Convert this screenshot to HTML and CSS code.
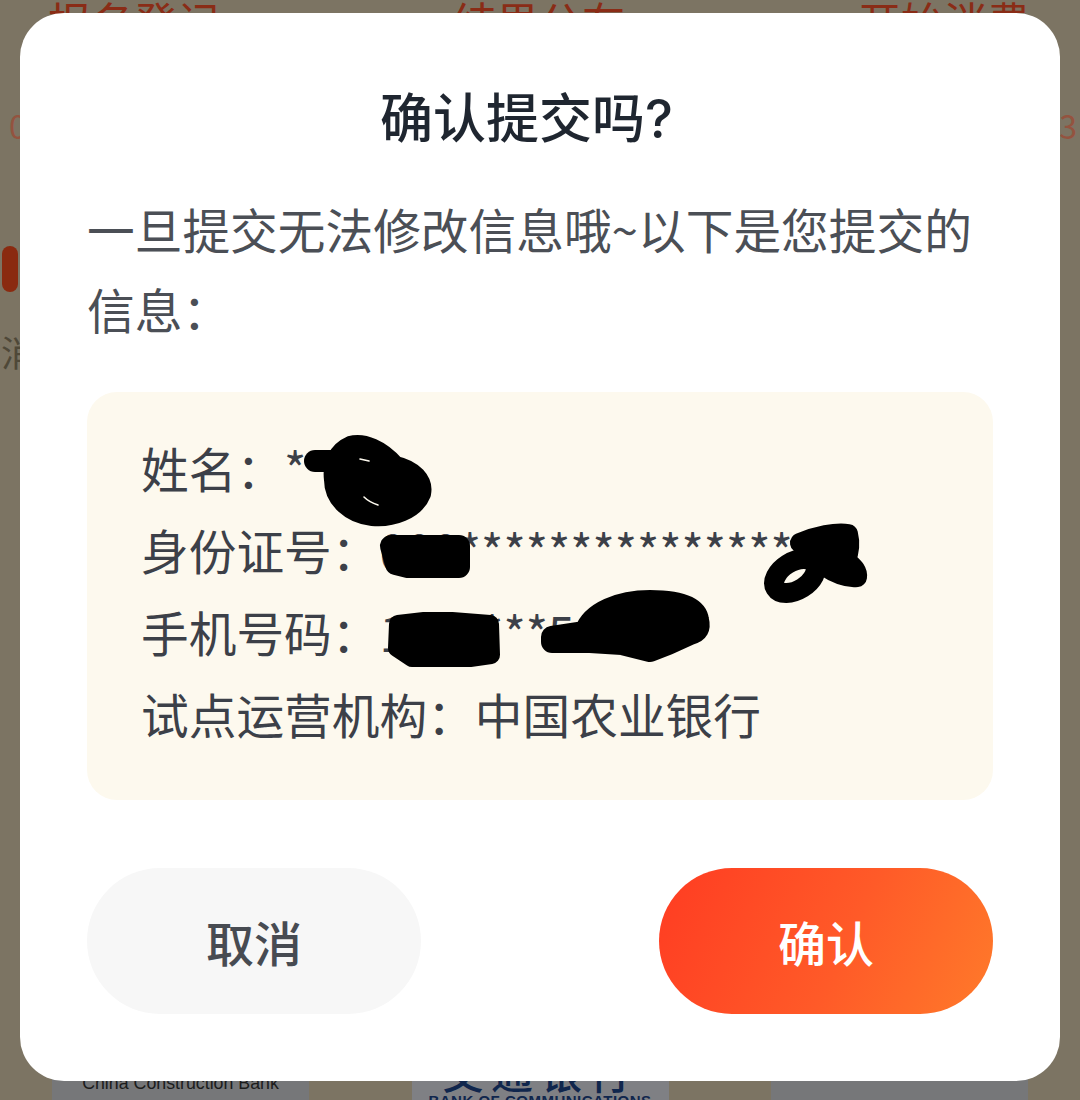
FILE: index.html
```html
<!DOCTYPE html>
<html lang="zh-CN">
<head>
<meta charset="utf-8">
<title>确认提交吗?</title>
<link rel="stylesheet" href="styles.css">
</head>
<body>
<div class="page">
  <div class="steps">
    <span>报名登记</span>
    <span>结果公布</span>
    <span>开始消费</span>
  </div>
  <div class="dates"><span>0</span><span>3</span></div>
  <div class="pill"></div>
  <div class="side-label">消</div>
  <div class="banks">
    <div class="bank bank-ccb"><span>China Construction Bank</span></div>
    <div class="bank bank-bocom"><b>交通银行</b><small>BANK OF COMMUNICATIONS</small></div>
    <div class="bank bank-plain"></div>
  </div>
</div>
<div class="overlay">
  <div class="modal">
    <h1 class="title">确认提交吗?</h1>
    <p class="desc">一旦提交无法修改信息哦~以下是您提交的信息：</p>
    <div class="info">
      <div class="row">姓名：*</div>
      <div class="row">身份证号：000***************</div>
      <div class="row">手机号码：100****5</div>
      <div class="row">试点运营机构：中国农业银行</div>
    </div>
    <div class="actions">
      <button class="btn btn-cancel">取消</button>
      <button class="btn btn-ok">确认</button>
    </div>
  </div>
  <svg class="scribble" viewBox="0 0 1080 1100" aria-hidden="true">
    <g fill="#000" stroke="#000" stroke-linecap="round" stroke-linejoin="round">
      <path fill="none" stroke-width="22" d="M315 461 L345 461"/>
      <path stroke-width="16" d="M350 444 C364 440 382 448 396 464 C414 468 426 480 423 494 C416 512 392 520 372 518 C350 516 332 500 332 480 C330 464 336 450 350 444 Z"/>
      <path fill="none" stroke="#fdf9ee" stroke-width="1.6" d="M360 459 L369 461 M364 497 C368 501 372 503 378 505"/>
      <path stroke-width="22" d="M391 546 L459 546 L459 567 L440 567 L408 567 L396 564 Z"/>
      <path stroke-width="20" d="M800 543 C816 536 836 532 848 534 C850 542 850 550 846 560 C852 566 858 570 857 577 C848 578 836 574 824 566 L812 552 Z"/>
      <ellipse cx="795" cy="576" rx="23" ry="14" fill="none" stroke-width="20" transform="rotate(-32 795 576)"/>
      <path stroke-width="18" d="M398 624 L424 621 L452 621 L490 624 L491 655 L470 658 L412 658 L397 648 Z"/>
      <path stroke-width="22" d="M552 637 L585 632 C592 612 620 601 650 601 C676 601 696 606 698 620 C700 628 698 632 690 634 L668 644 L650 651 L622 644 L590 642 L552 642 Z"/>
    </g>
  </svg>
</div>
</body>
</html>
```

FILE: styles.css
```css
* { box-sizing: border-box; }
html, body { margin: 0; padding: 0; }
body {
  width: 1080px;
  height: 1100px;
  overflow: hidden;
  background: #7c7463;
  font-family: "Noto Sans CJK SC", "Noto Sans", sans-serif;
  position: relative;
}
.page {
  height: 1100px;
  display: flex;
  flex-direction: column;
  overflow: hidden;
}
.steps {
  display: flex;
  justify-content: space-between;
  padding: 0 50px 0 48px;
  margin-top: -2px;
  height: 44px;
  font-size: 43px;
  line-height: 44px;
  color: #8a2c16;
}
.dates {
  display: flex;
  justify-content: space-between;
  margin-top: 63px;
  padding: 0 3px 0 9px;
  height: 40px;
  font-size: 32px;
  line-height: 40px;
  color: #94533f;
}
.pill {
  width: 16px;
  height: 46px;
  margin: 101px 0 0 2px;
  border-radius: 8px;
  background: #8a2a10;
}
.side-label {
  margin: 37px 0 0 1px;
  font-size: 36px;
  line-height: 44px;
  color: #4f4838;
}
.banks {
  margin-top: auto;
  display: flex;
  justify-content: space-between;
  padding: 0 52px;
  height: 60px;
}
.bank {
  width: 257px;
  background: #767779;
  display: flex;
  flex-direction: column;
  align-items: center;
}
.bank-ccb span {
  margin-top: 33px;
  font-family: "Liberation Sans", sans-serif;
  font-size: 17.8px;
  line-height: 20px;
  color: #1c1c1c;
  white-space: nowrap;
}
.bank-bocom { background: #7f8084; color: #10264d; }
.bank-bocom b {
  margin-top: 10px;
  font-size: 42px;
  line-height: 42px;
  letter-spacing: 7px;
  font-weight: 500;
  white-space: nowrap;
}
.bank-bocom small {
  margin-top: 1px;
  font-family: "Liberation Sans", sans-serif;
  font-size: 15px;
  line-height: 16px;
  letter-spacing: 0.5px;
  font-weight: 700;
  white-space: nowrap;
}
.overlay {
  position: absolute;
  inset: 0;
}
.modal {
  margin: 13px 20px 0;
  height: 1068px;
  padding: 76px 67px 0;
  background: #fff;
  border-radius: 44px;
  display: flex;
  flex-direction: column;
}
.title {
  margin: 0;
  font-family: "Inter", "Noto Sans CJK SC", sans-serif;
  font-size: 53px;
  line-height: 60px;
  font-weight: 500;
  color: #1f2630;
  text-align: center;
  padding-right: 27px;
}
.desc {
  margin: 40px 0 0;
  font-size: 47.7px;
  line-height: 80px;
  color: #4b4f56;
}
.info {
  margin-top: 43px;
  height: 408px;
  padding: 35px 54px 0;
  background: #fdf9ee;
  border-radius: 30px;
}
.row {
  font-size: 47.7px;
  line-height: 82px;
  color: #3c4048;
  white-space: nowrap;
}
.actions {
  margin-top: 68px;
  display: flex;
  justify-content: space-between;
}
.btn {
  width: 334px;
  height: 146px;
  border: 0;
  border-radius: 73px;
  font-family: inherit;
  font-size: 48px;
  font-weight: 500;
}
.btn-cancel { background: #f7f7f7; color: #474b52; }
.btn-ok {
  background: linear-gradient(115deg, #ff3c22 0%, #ff5a28 55%, #ff7a2a 100%);
  color: #fff;
}
.scribble {
  position: absolute;
  inset: 0;
  width: 1080px;
  height: 1100px;
  pointer-events: none;
}
```
